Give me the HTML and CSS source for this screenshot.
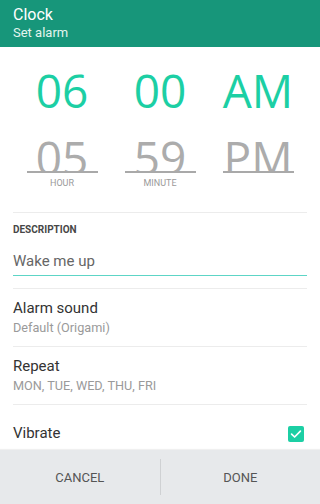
FILE: index.html
```html
<!DOCTYPE html>
<html>
<head>
<meta charset="utf-8">
<link rel="stylesheet" href="styles.css">
</head>
<body>
<div class="app">
  <header class="appbar">
    <div class="title">Clock</div>
    <div class="subtitle">Set alarm</div>
  </header>
  <main class="content">
    <section class="picker">
      <div class="col">
        <div class="cur">06</div>
        <div class="prev"><span>05</span></div>
        <div class="unit">HOUR</div>
      </div>
      <div class="col">
        <div class="cur">00</div>
        <div class="prev"><span>59</span></div>
        <div class="unit">MINUTE</div>
      </div>
      <div class="col">
        <div class="cur">AM</div>
        <div class="prev"><span>PM</span></div>
        <div class="unit"></div>
      </div>
    </section>
    <section class="desc">
      <div class="desc-label">DESCRIPTION</div>
      <div class="desc-input">Wake me up</div>
    </section>
    <section class="row">
      <div class="row-title">Alarm sound</div>
      <div class="row-sub">Default (Origami)</div>
    </section>
    <section class="row">
      <div class="row-title">Repeat</div>
      <div class="row-sub">MON, TUE, WED, THU, FRI</div>
    </section>
    <section class="row vib">
      <div class="row-title">Vibrate</div>
      <div class="check">
        <svg viewBox="0 0 16 16" width="16" height="16"><path d="M3.6 8.2 L6.6 11 L12.4 5.2" fill="none" stroke="#fff" stroke-width="1.7" stroke-linecap="round" stroke-linejoin="round"/></svg>
      </div>
    </section>
  </main>
  <footer class="actions">
    <div class="btn">CANCEL</div>
    <div class="sep"></div>
    <div class="btn">DONE</div>
  </footer>
</div>
</body>
</html>
```
FILE: styles.css
```css
* { box-sizing: border-box; }
html, body { margin: 0; padding: 0; }
body {
  width: 320px;
  height: 504px;
  overflow: hidden;
  font-family: Roboto, "Liberation Sans", sans-serif;
  background: #fff;
}
.app {
  display: flex;
  flex-direction: column;
  height: 504px;
}
.appbar {
  background: #17967a;
  height: 47px;
  padding: 5px 13px 0;
  color: #fff;
}
.title {
  font-size: 16px;
  line-height: 19px;
}
.subtitle {
  font-size: 13px;
  line-height: 17px;
  color: #e3f5ef;
}
.content {
  flex: 1;
  padding: 0 13px;
  display: flex;
  flex-direction: column;
}
.picker {
  display: grid;
  grid-template-columns: repeat(3, 1fr);
  padding-top: 20px;
  height: 166px;
  border-bottom: 1px solid #ececec;
}
.col {
  display: flex;
  flex-direction: column;
  align-items: center;
}
.cur {
  font-family: "Open Sans", sans-serif;
  font-size: 46px;
  line-height: 46px;
  height: 46px;
  color: #1ccfa4;
}
.prev {
  margin-top: 16px;
  width: 71px;
  height: 44px;
  overflow: hidden;
  border-bottom: 2px solid #a9a9a9;
  display: flex;
  justify-content: center;
  align-items: flex-start;
}
.prev span {
  font-family: "Open Sans", sans-serif;
  font-size: 46px;
  line-height: 46px;
  color: #acacac;
  padding-top: 5px;
}
.unit {
  margin-top: 5px;
  font-size: 9px;
  line-height: 11px;
  color: #9a9a9a;
  height: 11px;
}
.desc {
  height: 76px;
  padding-top: 11px;
  border-bottom: 1px solid #ececec;
}
.desc-label {
  font-size: 10px;
  font-weight: 700;
  color: #474747;
  line-height: 11px;
}
.desc-input {
  margin-top: 15px;
  font-size: 15px;
  line-height: 22px;
  color: #666;
  padding-bottom: 3px;
  border-bottom: 1px solid #5dd5c6;
}
.row {
  height: 58px;
  padding-top: 9px;
  border-bottom: 1px solid #ececec;
}
.row-title {
  font-size: 15px;
  line-height: 20px;
  color: #333;
}
.row-sub {
  margin-top: 2px;
  font-size: 12.7px;
  line-height: 16px;
  color: #9a9a9a;
}
.row.vib {
  border-bottom: none;
  height: auto;
  flex: 1;
  padding-top: 18px;
  display: flex;
  align-items: flex-start;
  justify-content: space-between;
}
.check {
  width: 16px;
  height: 16px;
  margin-top: 3px;
  border-radius: 2px;
  background: #1ccfa4;
  margin-right: 3px;
  display: flex;
}
.actions {
  height: 54px;
  background: #e7e9eb;
  display: flex;
  align-items: center;
  box-shadow: 0 -1px 1px rgba(0,0,0,0.06);
}
.btn {
  flex: 1;
  text-align: center;
  font-size: 13px;
  color: #555;
}
.sep {
  width: 1px;
  height: 36px;
  background: #cfd1d3;
}
```
